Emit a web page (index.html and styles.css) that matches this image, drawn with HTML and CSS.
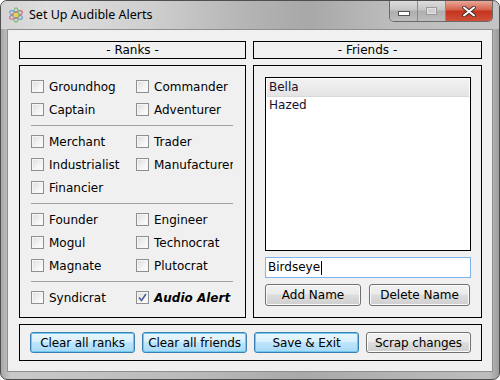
FILE: index.html
```html
<!DOCTYPE html>
<html lang="en">

<head>
    <meta charset="UTF-8">
    <meta name="viewport" content="width=device-width, initial-scale=1.0">
    <title>Set Up Audible Alerts</title>
    <link rel="stylesheet" href="styles.css">
</head>

<body>
    <div class="window">
        <div class="titlebar">
            <svg class="app-icon" width="16" height="16" viewBox="0 0 16 16">
                <ellipse cx="8" cy="8" rx="7" ry="2.6" fill="none" stroke="#6a9fd8" stroke-width="1.3" transform="rotate(30 8 8)" />
                <ellipse cx="8" cy="8" rx="7" ry="2.6" fill="none" stroke="#d46a7a" stroke-width="1.3" transform="rotate(-30 8 8)" />
                <ellipse cx="8" cy="8" rx="7" ry="2.6" fill="none" stroke="#7fbf7f" stroke-width="1.3" transform="rotate(90 8 8)" />
                <circle cx="8" cy="8" r="2.2" fill="#f2d04a" />
            </svg>
            <span class="title">Set Up Audible Alerts</span>
            <div class="caption-buttons">
                <div class="cap cap-min"><span class="min-glyph"></span></div>
                <div class="cap cap-max"><span class="max-glyph"></span></div>
                <div class="cap cap-close">
                    <svg width="14" height="11" viewBox="0 0 14 11">
                        <path d="M2 1.5 L12 9.5 M12 1.5 L2 9.5" stroke="#3a2a2a" stroke-width="3.6" stroke-linecap="round" />
                        <path d="M2 1.5 L12 9.5 M12 1.5 L2 9.5" stroke="#ffffff" stroke-width="2" stroke-linecap="round" />
                    </svg>
                </div>
            </div>
        </div>

        <div class="client">
            <div class="layout">
                <div class="heading">- Ranks -</div>
                <div class="heading">- Friends -</div>

                <div class="panel ranks">
                    <div class="rank-grid">
                        <label class="check"><span class="box"></span>Groundhog</label>
                        <label class="check"><span class="box"></span>Commander</label>
                        <label class="check"><span class="box"></span>Captain</label>
                        <label class="check"><span class="box"></span>Adventurer</label>
                        <div class="separator"></div>
                        <label class="check"><span class="box"></span>Merchant</label>
                        <label class="check"><span class="box"></span>Trader</label>
                        <label class="check"><span class="box"></span>Industrialist</label>
                        <label class="check"><span class="box"></span>Manufacturer</label>
                        <label class="check"><span class="box"></span>Financier</label>
                        <div></div>
                        <div class="separator"></div>
                        <label class="check"><span class="box"></span>Founder</label>
                        <label class="check"><span class="box"></span>Engineer</label>
                        <label class="check"><span class="box"></span>Mogul</label>
                        <label class="check"><span class="box"></span>Technocrat</label>
                        <label class="check"><span class="box"></span>Magnate</label>
                        <label class="check"><span class="box"></span>Plutocrat</label>
                        <div class="separator"></div>
                        <label class="check"><span class="box"></span>Syndicrat</label>
                        <label class="check alert"><span class="box checked">
                            <svg width="9" height="9" viewBox="0 0 9 9">
                                <path d="M1 4.5 L3.5 7.5 L8 1" fill="none" stroke="#4a5f9a" stroke-width="1.6" />
                            </svg>
                        </span>Audio Alert</label>
                    </div>
                </div>

                <div class="panel friends">
                    <div class="friend-list">
                        <div class="friend selected">Bella</div>
                        <div class="friend">Hazed</div>
                    </div>
                    <div class="name-field">Birdseye<span class="caret"></span></div>
                    <div class="friend-buttons">
                        <button class="btn add">Add Name</button>
                        <button class="btn del">Delete Name</button>
                    </div>
                </div>

                <div class="panel actions">
                    <button class="btn blue">Clear all ranks</button>
                    <button class="btn blue">Clear all friends</button>
                    <button class="btn blue">Save &amp; Exit</button>
                    <button class="btn">Scrap changes</button>
                </div>
            </div>
        </div>
    </div>
</body>

</html>
```

FILE: styles.css
```css
body {
    margin: 0;
    padding: 0;
    width: 500px;
    height: 380px;
    overflow: hidden;
    background: #ffffff;
    font-family: "DejaVu Sans", Verdana, sans-serif;
}

.window {
    box-sizing: border-box;
    width: 500px;
    height: 380px;
    border: 1px solid #4f4f4f;
    border-radius: 7px;
    background: linear-gradient(to right, #a8a8a8, #c9c9c9 2%, #b9b9b9 40%, #a9a9a9 60%, #bdbdbd 98%, #9c9c9c);
    padding: 0 6px 7px 6px;
    display: flex;
    flex-direction: column;
}

.titlebar {
    height: 28px;
    display: flex;
    align-items: flex-start;
    margin: 0 -6px;
    padding: 0 6px;
    border-radius: 6px 6px 0 0;
    background: linear-gradient(to right, #d4d4d4, #dedede 10%, #cfcfcf 30%, #b3b3b3 50%, #a8a8a8 62%, #bcbcbc 78%, #c4c4c4);
}

.app-icon {
    margin: 6px 5px 0 1px;
    flex-shrink: 0;
}

.title {
    font-family: "Noto Sans", "Open Sans", sans-serif;
    font-size: 12.5px;
    color: #000;
    margin-top: 6px;
    line-height: 16px;
}

.caption-buttons {
    margin-left: auto;
    display: flex;
    height: 20px;
    border: 1px solid #6a6a6a;
    border-top: none;
    border-radius: 0 0 5px 5px;
    overflow: hidden;
}

.cap {
    height: 20px;
    display: flex;
    align-items: center;
    justify-content: center;
}

.cap-min,
.cap-max {
    width: 27px;
    background: linear-gradient(#dcdcdc, #c6c6c6 45%, #aeaeae 50%, #bdbdbd);
    border-right: 1px solid #8a8a8a;
}

.min-glyph {
    width: 10px;
    height: 3px;
    margin-top: 5px;
    background: #fff;
    border: 1px solid #555;
}

.max-glyph {
    width: 9px;
    height: 6px;
    border: 1px solid #9a9a9a;
    background: #cfcfcf;
    box-shadow: inset 0 0 0 1px #e0e0e0;
}

.cap-close {
    width: 46px;
    background: linear-gradient(#e8a898, #d4604a 45%, #c4331f 50%, #d05038);
}

.client {
    flex: 1;
    background: #f0f0f0;
    border: 1px solid #8e8e8e;
    padding: 11px 10px 0 11px;
}

.layout {
    display: grid;
    grid-template-columns: 227px 229px;
    grid-template-rows: 18px 253px 37px;
    column-gap: 7px;
    row-gap: 6px;
}

.heading {
    border: 1px solid #000;
    text-align: center;
    font-size: 12px;
    line-height: 16px;
    color: #000;
}

.panel {
    border: 1px solid #000;
    box-sizing: border-box;
}

.ranks {
    padding: 9px 12px 0 11px;
}

.rank-grid {
    display: grid;
    grid-template-columns: 105px 97px;
    overflow: hidden;
}

.check {
    height: 23px;
    display: flex;
    align-items: center;
    gap: 5px;
    font-size: 12px;
    color: #000;
    white-space: nowrap;
    overflow: hidden;
}

.box {
    width: 11px;
    height: 11px;
    flex-shrink: 0;
    border: 1px solid #8e8f8f;
    background: linear-gradient(135deg, #dcdcdc, #f4f4f4 60%, #ffffff);
    box-shadow: inset 0 0 0 1px #f6f6f6;
    display: flex;
    align-items: center;
    justify-content: center;
}

.alert {
    font-weight: bold;
    font-style: italic;
}

.separator {
    grid-column: 1 / 3;
    height: 9px;
    background: linear-gradient(#a0a0a0, #a0a0a0) center / 100% 1px no-repeat;
}

.friends {
    padding: 11px 10px 0 11px;
    display: flex;
    flex-direction: column;
}

.friend-list {
    height: 174px;
    box-sizing: border-box;
    border: 1px solid #000;
    background: #fff;
    padding: 1px;
}

.friend {
    font-size: 12px;
    line-height: 17px;
    padding-left: 2px;
    color: #1a1030;
}

.friend.selected {
    background: linear-gradient(#f2f2f2, #e4e4e4);
    border-bottom: 1px solid #d8d8d8;
}

.name-field {
    margin-top: 6px;
    height: 21px;
    box-sizing: border-box;
    border: 1px solid #7eb4ea;
    background: #fff;
    font-size: 12px;
    line-height: 19px;
    padding-left: 2px;
    color: #000;
    display: flex;
    align-items: center;
}

.caret {
    width: 1px;
    height: 14px;
    background: #000;
    margin-left: 1px;
}

.friend-buttons {
    margin-top: 6px;
    display: flex;
    gap: 8px;
}

.btn {
    height: 22px;
    padding: 0;
    box-sizing: border-box;
    border: 1px solid #707070;
    border-radius: 3px;
    background: linear-gradient(#f2f2f2, #ebebeb 45%, #dddddd 50%, #cfcfcf);
    box-shadow: inset 0 0 0 1px #fcfcfc;
    font-family: "DejaVu Sans", Verdana, sans-serif;
    font-size: 12px;
    color: #000;
    white-space: nowrap;
    overflow: hidden;
}

.add {
    width: 96px;
}

.del {
    width: 101px;
}

.actions {
    grid-column: 1 / 3;
    width: 463px;
    padding: 7px 10px 0 10px;
    display: grid;
    grid-template-columns: repeat(4, 105px);
    column-gap: 7px;
    align-items: start;
}

.actions .btn {
    height: 21px;
    width: 105px;
    font-size: 12px;
    letter-spacing: -0.1px;
}

.btn.blue {
    border-color: #3c7fb1;
    background: linear-gradient(#eaf6fd, #d9f0fc 45%, #bee6fd 50%, #a7d9f5);
    box-shadow: inset 0 0 0 1px #6fc8f0;
}
```
